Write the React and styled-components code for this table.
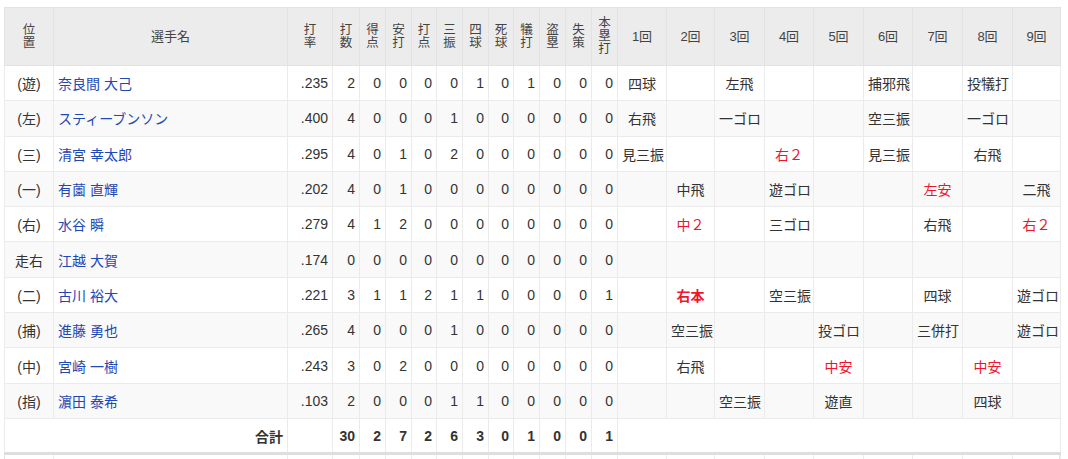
import styled, { createGlobalStyle } from 'styled-components';

const GlobalStyle = createGlobalStyle`
  body {
    margin: 0;
    background: #ffffff;
    font-family: 'Liberation Sans', Arial, 'Noto Sans CJK JP', sans-serif;
    color: #333333;
  }
`;

const Page = styled.div`
  padding: 7px 8px 0 4px;
`;

const Table = styled.table`
  width: 1056px;
  table-layout: fixed;
  border-collapse: collapse;
  font-size: 14px;
  border-left: 1px solid #e3e3e3;
  border-right: 1px solid #e3e3e3;
  border-top: 1px solid #e6e6e6;
  border-bottom: 3px solid #dedede;
`;

const Head = styled.th`
  background: #ececec;
  color: #444444;
  font-weight: 400;
  font-size: 13px;
  height: 57px;
  padding: 0;
  text-align: center;
  vertical-align: middle;
  border: 1px solid #e2e2e2;
  line-height: 13px;
`;

const Stack = styled.span`
  display: inline-block;
  width: 1em;
  font-size: 12.5px;
  line-height: 13px;
  word-break: break-all;
`;

const Row = styled.tr`
  height: 35.3px;
  background: ${(p) => (p.$alt ? '#f9f9f9' : '#ffffff')};
`;

const Cell = styled.td`
  border: 1px solid #ebebeb;
  padding: 0 4px;
  text-align: ${(p) => p.$align || 'center'};
  vertical-align: middle;
  white-space: nowrap;
  overflow: hidden;
  color: ${(p) => (p.$hit ? '#f0142d' : '#333333')};
  font-weight: ${(p) => (p.$bold ? 700 : 400)};
`;

const Name = styled.a`
  color: #1e48b4;
  text-decoration: none;
`;

const NextTable = styled.div`
  display: grid;
  grid-template-columns: 49px 234px 45px 27px 26px 26px 25px 26px 26px 25px 26px 26px 26px 26px 49px 48px 50px 49px 50px 49px 50px 50px 48px;
  width: 1056px;
  height: 20px;
  border-left: 1px solid #e3e3e3;
  border-right: 1px solid #e3e3e3;
  box-sizing: border-box;
  & > span {
    border-right: 1px solid #ececec;
  }
`;

const widths = [49, 234, 45, 27, 26, 26, 25, 26, 26, 25, 26, 26, 26, 26, 49, 48, 50, 49, 50, 49, 50, 50, 48];

const statHeads = ['打率', '打数', '得点', '安打', '打点', '三振', '四球', '死球', '犠打', '盗塁', '失策', '本塁打'];

const players = [
  ['(遊)', '奈良間 大己', '.235', [2, 0, 0, 0, 0, 1, 0, 1, 0, 0, 0], ['四球', '', '左飛', '', '', '捕邪飛', '', '投犠打', '']],
  ['(左)', 'スティーブンソン', '.400', [4, 0, 0, 0, 1, 0, 0, 0, 0, 0, 0], ['右飛', '', '一ゴロ', '', '', '空三振', '', '一ゴロ', '']],
  ['(三)', '清宮 幸太郎', '.295', [4, 0, 1, 0, 2, 0, 0, 0, 0, 0, 0], ['見三振', '', '', '*右２', '', '見三振', '', '右飛', '']],
  ['(一)', '有薗 直輝', '.202', [4, 0, 1, 0, 0, 0, 0, 0, 0, 0, 0], ['', '中飛', '', '遊ゴロ', '', '', '*左安', '', '二飛']],
  ['(右)', '水谷 瞬', '.279', [4, 1, 2, 0, 0, 0, 0, 0, 0, 0, 0], ['', '*中２', '', '三ゴロ', '', '', '右飛', '', '*右２']],
  ['走右', '江越 大賀', '.174', [0, 0, 0, 0, 0, 0, 0, 0, 0, 0, 0], ['', '', '', '', '', '', '', '', '']],
  ['(二)', '古川 裕大', '.221', [3, 1, 1, 2, 1, 1, 0, 0, 0, 0, 1], ['', '!右本', '', '空三振', '', '', '四球', '', '遊ゴロ']],
  ['(捕)', '進藤 勇也', '.265', [4, 0, 0, 0, 1, 0, 0, 0, 0, 0, 0], ['', '空三振', '', '', '投ゴロ', '', '三併打', '', '遊ゴロ']],
  ['(中)', '宮崎 一樹', '.243', [3, 0, 2, 0, 0, 0, 0, 0, 0, 0, 0], ['', '右飛', '', '', '*中安', '', '', '*中安', '']],
  ['(指)', '濵田 泰希', '.103', [2, 0, 0, 0, 1, 1, 0, 0, 0, 0, 0], ['', '', '空三振', '', '遊直', '', '', '四球', '']],
];

const totals = [30, 2, 7, 2, 6, 3, 0, 1, 0, 0, 1];

function Result({ value }) {
  if (value.startsWith('!')) {
    return <Cell $hit $bold>{value.slice(1)}</Cell>;
  }
  if (value.startsWith('*')) {
    return <Cell $hit>{value.slice(1)}</Cell>;
  }
  return <Cell>{value}</Cell>;
}

export default function App() {
  return (
    <>
      <GlobalStyle />
      <Page>
        <Table>
          <colgroup>
            {widths.map((w, i) => (
              <col key={i} style={{ width: w }} />
            ))}
          </colgroup>
          <thead>
            <tr>
              <Head>
                <Stack>位置</Stack>
              </Head>
              <Head>選手名</Head>
              {statHeads.map((h) => (
                <Head key={h}>
                  <Stack>{h}</Stack>
                </Head>
              ))}
              {Array.from({ length: 9 }, (_, i) => (
                <Head key={i}>{i + 1}回</Head>
              ))}
            </tr>
          </thead>
          <tbody>
            {players.map(([pos, name, avg, stats, results], i) => (
              <Row key={name} $alt={i % 2 === 1}>
                <Cell>{pos}</Cell>
                <Cell $align="left">
                  <Name href="#">{name}</Name>
                </Cell>
                <Cell $align="right">{avg}</Cell>
                {stats.map((s, j) => (
                  <Cell key={j} $align="right">
                    {s}
                  </Cell>
                ))}
                {results.map((r, j) => (
                  <Result key={j} value={r} />
                ))}
              </Row>
            ))}
            <Row>
              <Cell colSpan={2} $align="right" $bold>
                合計
              </Cell>
              <Cell />
              {totals.map((t, j) => (
                <Cell key={j} $align="right" $bold>
                  {t}
                </Cell>
              ))}
              <Cell colSpan={9} />
            </Row>
          </tbody>
        </Table>
        <NextTable>
          {widths.map((w, i) => (
            <span key={i} />
          ))}
        </NextTable>
      </Page>
    </>
  );
}
